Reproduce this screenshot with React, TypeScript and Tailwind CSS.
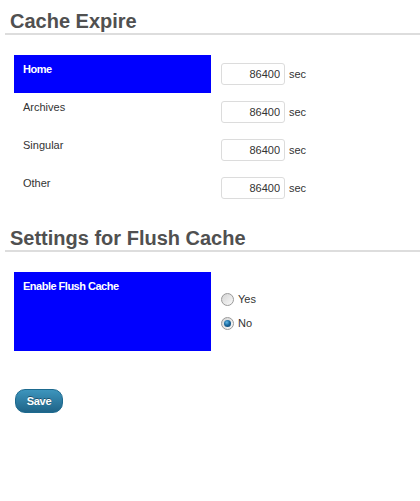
import { useState } from 'react';

interface ExpireRow {
  key: string;
  label: string;
  value: string;
  highlight?: boolean;
}

const rows: ExpireRow[] = [
  { key: 'home', label: 'Home', value: '86400', highlight: true },
  { key: 'archives', label: 'Archives', value: '86400' },
  { key: 'singular', label: 'Singular', value: '86400' },
  { key: 'other', label: 'Other', value: '86400' },
];

function Radio({ checked }: { checked: boolean }) {
  return (
    <span className="relative inline-flex h-[13px] w-[13px] items-center justify-center rounded-full border border-[#9a9a9a] bg-linear-to-br from-[#d4d4d4] to-[#fafafa]">
      {checked && (
        <span className="h-[7px] w-[7px] rounded-full bg-[radial-gradient(circle_at_40%_35%,#5fb6e6_0,#1a6aa0_45%,#0a3b63_100%)]" />
      )}
    </span>
  );
}

export default function App() {
  const [flush, setFlush] = useState<'yes' | 'no'>('no');

  return (
    <div className="h-[501px] w-[420px] overflow-hidden bg-white font-[family-name:Liberation_Sans,Arial,sans-serif] text-[11px] text-[#333]">
      <h2 className="ml-[5px] mt-[9px] border-b-2 border-[#ddd] pl-[5px] text-[20px] font-bold leading-[24px] text-[#505050]">
        Cache Expire
      </h2>

      <div className="mt-[20px]">
        {rows.map((row) => (
          <div key={row.key} className="flex h-[38px]">
            <div
              className={
                row.highlight
                  ? 'ml-[14px] w-[197px] bg-[#0000ff] pl-[9px] pt-[7px] font-bold leading-[14px] tracking-[-0.5px] text-white'
                  : 'ml-[14px] w-[197px] pl-[9px] pt-[7px] leading-[14px]'
              }
            >
              {row.label}
            </div>
            <div className="flex items-center pl-[10px]">
              <input
                type="text"
                defaultValue={row.value}
                className="h-[22px] w-[64px] rounded-[3px] border border-[#dcdcdc] pr-[4px] text-right text-[11px] text-[#333] outline-none"
              />
              <span className="ml-[4px]">sec</span>
            </div>
          </div>
        ))}
      </div>

      <h2 className="ml-[5px] mt-[19px] border-b-2 border-[#ddd] pl-[5px] text-[20px] font-bold leading-[24px] text-[#505050]">
        Settings for Flush Cache
      </h2>

      <div className="mt-[20px] flex h-[79px]">
        <div className="ml-[14px] w-[197px] bg-[#0000ff] pl-[9px] pt-[7px] font-bold leading-[14px] tracking-[-0.5px] text-white">
          Enable Flush Cache
        </div>
        <div className="flex flex-col justify-center pl-[10px]">
          <label className="flex h-[24px] cursor-pointer items-center" onClick={() => setFlush('yes')}>
            <Radio checked={flush === 'yes'} />
            <span className="ml-[4px]">Yes</span>
          </label>
          <label className="flex h-[24px] cursor-pointer items-center" onClick={() => setFlush('no')}>
            <Radio checked={flush === 'no'} />
            <span className="ml-[4px]">No</span>
          </label>
        </div>
      </div>

      <button className="ml-[15px] mt-[38px] h-[24px] w-[48px] rounded-[10px] border border-[#1d6a8f] bg-linear-to-b from-[#3d95bd] to-[#1f6488] text-[11px] font-bold tracking-[-0.3px] text-white [text-shadow:0_-1px_0_rgba(0,0,0,0.4)]">
        Save
      </button>
    </div>
  );
}
